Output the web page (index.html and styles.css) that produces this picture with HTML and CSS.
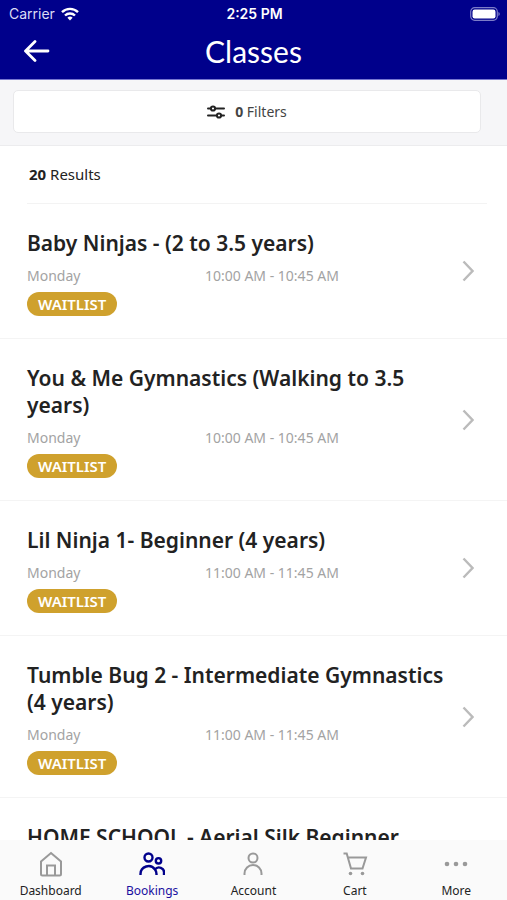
FILE: index.html
```html
<!DOCTYPE html>
<html lang="en">
<head>
<meta charset="utf-8">
<meta name="viewport" content="width=device-width, initial-scale=1">
<title>Classes</title>
<link rel="stylesheet" href="styles.css">
</head>
<body>
<header class="top">
  <div class="status">
    <div class="carrier">Carrier
      <svg width="18" height="14" viewBox="0 0 18 14" fill="none" stroke="#fff" stroke-width="2.4"><path d="M1 5.2a11.4 11.4 0 0 1 16 0M4 8.5a7.2 7.2 0 0 1 10 0"/><path d="M6.4 10.8a3.8 3.8 0 0 1 5.2 0L9 13.6z" fill="#fff" stroke="none"/></svg>
    </div>
    <div class="clock">2:25 PM</div>
    <svg class="battery" width="30" height="14" viewBox="0 0 30 14"><rect x=".7" y=".7" width="26.6" height="12.6" rx="4" fill="none" stroke="#7c7cc8" stroke-width="1.2"/><rect x="2.5" y="2.5" width="23" height="9" rx="2.2" fill="#fff"/><path d="M28.4 5v4q1.4-.6 1.4-2t-1.4-2z" fill="#7c7cc8"/></svg>
  </div>
  <div class="title-bar">
    <button class="back" type="button" aria-label="Back"><svg width="26" height="22" viewBox="0 0 26 22" fill="none" stroke="#fff" stroke-width="2.8" stroke-linecap="round" stroke-linejoin="round"><path d="M24 11H2M11 1.5 1.5 11l9.5 9.5"/></svg></button>
    <h1>Classes</h1>
  </div>
</header>
<div class="filter-bar">
  <button class="filters" type="button">
    <svg width="18" height="14" viewBox="0 0 18 14" fill="#fff" stroke="#222" stroke-width="2" stroke-linecap="round"><path d="M1 3.5h16M1 10.5h16"/><circle cx="6" cy="3.5" r="2.1"/><circle cx="12" cy="10.5" r="2.1"/></svg>
    <span><b>0</b> Filters</span>
  </button>
</div>
<main>
  <p class="results"><b>20</b> Results</p>
  <ul class="classes">
    <li><a href="#"><div class="info"><h2>Baby Ninjas - (2 to 3.5 years)</h2><div class="meta"><span>Monday</span><span>10:00 AM - 10:45 AM</span></div><span class="badge">WAITLIST</span></div><svg class="chevron" viewBox="0 0 12 22"><path d="M1.5 1.5 10.5 11l-9 9.5"/></svg></a></li>
    <li><a href="#"><div class="info"><h2>You &amp; Me Gymnastics (Walking to 3.5 years)</h2><div class="meta"><span>Monday</span><span>10:00 AM - 10:45 AM</span></div><span class="badge">WAITLIST</span></div><svg class="chevron" viewBox="0 0 12 22"><path d="M1.5 1.5 10.5 11l-9 9.5"/></svg></a></li>
    <li><a href="#"><div class="info"><h2>Lil Ninja 1- Beginner (4 years)</h2><div class="meta"><span>Monday</span><span>11:00 AM - 11:45 AM</span></div><span class="badge">WAITLIST</span></div><svg class="chevron" viewBox="0 0 12 22"><path d="M1.5 1.5 10.5 11l-9 9.5"/></svg></a></li>
    <li><a href="#"><div class="info"><h2>Tumble Bug 2 - Intermediate Gymnastics (4 years)</h2><div class="meta"><span>Monday</span><span>11:00 AM - 11:45 AM</span></div><span class="badge">WAITLIST</span></div><svg class="chevron" viewBox="0 0 12 22"><path d="M1.5 1.5 10.5 11l-9 9.5"/></svg></a></li>
    <li><a href="#"><div class="info"><h2>HOME SCHOOL - Aerial Silk Beginner</h2></div></a></li>
  </ul>
</main>
<nav class="tabs">
  <a href="#"><svg viewBox="0 0 26 26"><path d="M3 10.500 13 2l10 8.500V23a1.500 1.500 0 0 1-1.500 1.500h-17A1.500 1.500 0 0 1 3 23zM9 24v-9.500h8V24"/></svg>Dashboard</a>
  <a href="#" class="active" aria-current="page"><svg viewBox="0 0 26 26"><circle cx="9.500" cy="6.500" r="4"/><circle cx="19.500" cy="9.800" r="2.700"/><path d="M1.500 24v-1a8 8 0 0 1 14.500-4.500q1.500 2 1.500 4.500v1M16 18.500a5 5 0 0 1 9 3.500v2"/></svg>Bookings</a>
  <a href="#"><svg viewBox="0 0 26 26"><circle cx="13" cy="7" r="4.500"/><path d="M4.500 24v-1.500a8.500 8.500 0 0 1 17 0V24"/></svg>Account</a>
  <a href="#"><svg viewBox="0 0 26 26"><path d="M1.500 2.500h3.200L9 17.500h11.500L24 6.500H6"/><g class="dots"><circle cx="8.500" cy="22.500" r="1.800"/><circle cx="20.500" cy="22.500" r="1.800"/></g></svg>Cart</a>
  <a href="#"><svg viewBox="0 0 26 26"><g class="dots"><circle cx="4" cy="13" r="2.300"/><circle cx="13" cy="13" r="2.300"/><circle cx="22" cy="13" r="2.300"/></g></svg>More</a>
</nav>
</body>
</html>
```
FILE: styles.css
```css
* { box-sizing: border-box; }
body {
  margin: 0;
  height: 100vh;
  display: flex;
  flex-direction: column;
  overflow: hidden;
  background: #fff;
  color: #222;
  font-family: "Noto Sans", sans-serif;
}
h1, h2, p, ul { margin: 0; padding: 0; font-weight: 400; }
button { font: inherit; color: inherit; border: 0; cursor: pointer; }
a { color: inherit; text-decoration: none; }
svg { display: block; flex: none; }

.top { background: #00008b; color: #fff; border-bottom: 1px solid #7777d0; }
.status {
  display: grid;
  grid-template-columns: 1fr auto 1fr;
  align-items: center;
  height: 27px;
  padding: 0 7px 0 9px;
  font: 14px/20px Inter, sans-serif;
}
.carrier { display: flex; align-items: center; gap: 6px; color: #dcdcf4; }
.clock { font-weight: 600; }
.battery { justify-self: end; }
.title-bar {
  display: grid;
  grid-template-columns: 1fr auto 1fr;
  align-items: center;
  height: 52px;
  padding: 0 24px 4px;
}
.back { justify-self: start; padding: 0; background: none; }
h1 { font: 30px/36px Lato, sans-serif; }

.filter-bar {
  padding: 10px 26px 12px 13px;
  background: #f6f6f8;
  border-bottom: 1px solid #ececee;
}
.filters {
  display: flex;
  align-items: center;
  justify-content: center;
  gap: 10px;
  width: 100%;
  height: 43px;
  border: 1px solid #e9e9eb;
  border-radius: 5px;
  background: #fff;
  font-size: 14px;
  color: #444;
}

main { flex: 1; min-height: 0; overflow: hidden; }
.results {
  margin: 0 20px 0 27px;
  padding: 17px 2px 18px;
  border-bottom: 1px solid #f3f3f3;
  font-size: 15px;
  line-height: 22px;
}
.classes { list-style: none; }
.classes li { border-bottom: 1px solid #f4f4f4; }
.classes a {
  display: flex;
  align-items: center;
  gap: 8px;
  padding: 0 33px 0 27px;
}
.info { flex: 1; padding: 26px 0 22px; }
h2 { font-size: 21px; font-weight: 600; line-height: 27px; }
.meta {
  display: grid;
  grid-template-columns: 178px 1fr;
  margin: 9px 0 6px;
  font-size: 14px;
  line-height: 20px;
  color: #a3a3a3;
}
.badge {
  display: block;
  width: fit-content;
  padding: 0 11px;
  border-radius: 12px;
  background: #cfa12d;
  color: #fff;
  font-size: 15px;
  font-weight: 600;
  line-height: 24px;
}
.chevron {
  width: 12px;
  height: 22px;
  fill: none;
  stroke: #bbb;
  stroke-width: 2.4;
}

.tabs {
  display: grid;
  grid-template-columns: repeat(5, 1fr);
  height: 60px;
  padding-top: 11px;
  background: #fafafa;
}
.tabs a {
  display: flex;
  flex-direction: column;
  align-items: center;
  gap: 5px;
  font-size: 12px;
  line-height: 18px;
}
.tabs svg {
  width: 26px;
  height: 26px;
  fill: none;
  stroke: #999;
  stroke-width: 2;
}
.tabs .dots { fill: #999; stroke: none; }
.tabs .active { color: #1a10a0; }
.tabs .active svg { stroke: #00008b; stroke-width: 2.4; }
```
